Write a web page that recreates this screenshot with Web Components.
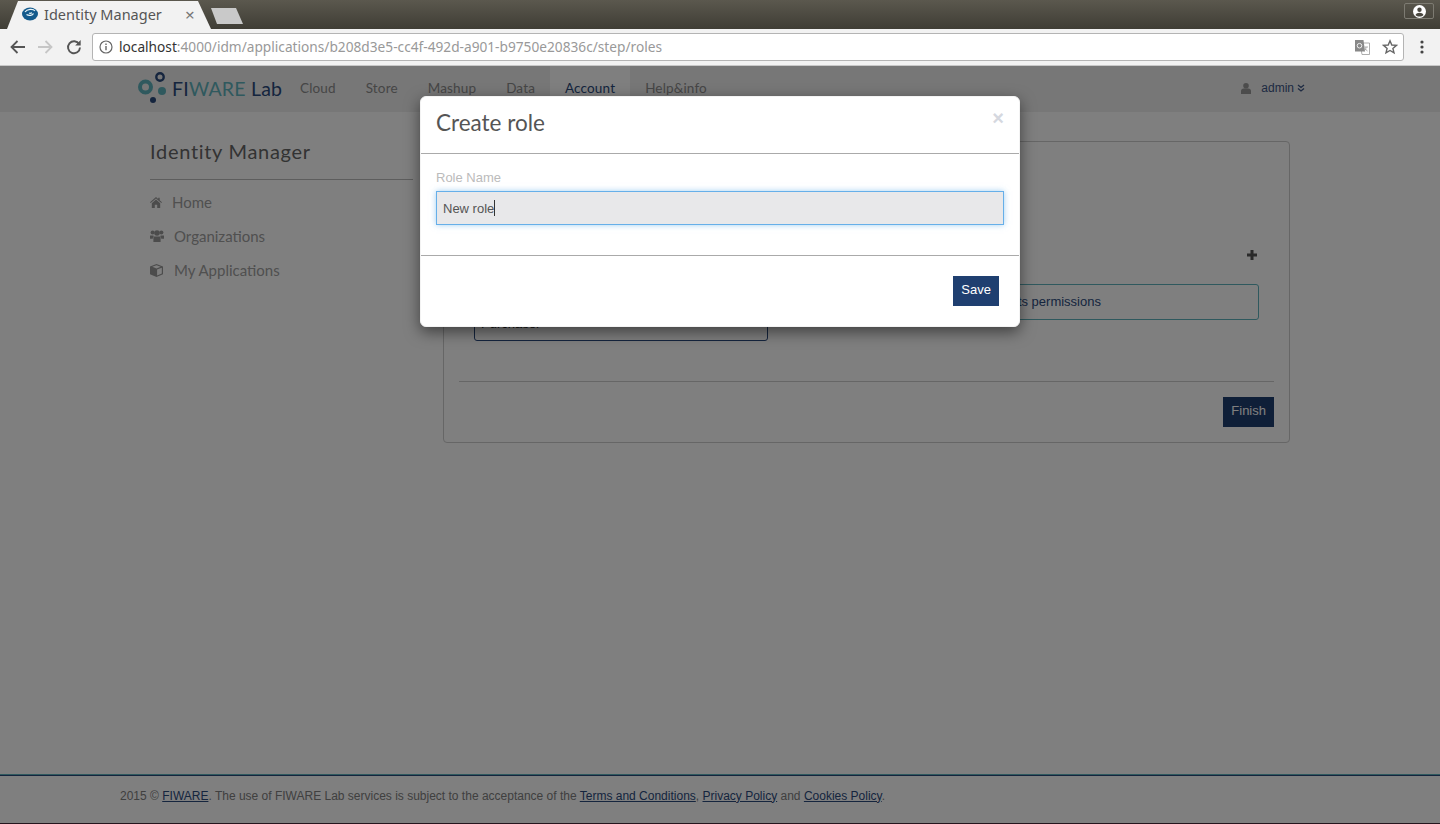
<!DOCTYPE html>
<html>
<head>
<meta charset="utf-8">
<title>Identity Manager</title>
<style>
html, body { margin: 0; padding: 0; height: 100%; }
body { display: flex; flex-direction: column; width: 1440px; height: 824px; overflow: hidden; background: #fff; font-family: "Liberation Sans", sans-serif; }
</style>
</head>
<body>
<browser-chrome></browser-chrome>
<app-page>
  <app-header slot="header">
    <nav-link>Cloud</nav-link>
    <nav-link>Store</nav-link>
    <nav-link>Mashup</nav-link>
    <nav-link>Data</nav-link>
    <nav-link active>Account</nav-link>
    <nav-link>Help&amp;info</nav-link>
  </app-header>
  <side-menu slot="side">
    <side-item gap="10">
      <svg slot="icon" width="12" height="11" viewBox="0 0 12 11"><path fill="currentColor" d="M6 0 8.2 1.9V.8h1.5v2.4L12 5.2l-.7.8L6 1.5.7 6 0 5.2zM1.8 6.2 6 2.6l4.2 3.6V11H7.2V7.8H4.8V11h-3z"/></svg>
      Home
    </side-item>
    <side-item gap="10">
      <svg slot="icon" width="14" height="12" viewBox="0 0 14 12"><g fill="currentColor"><circle cx="2.6" cy="2.6" r="2"/><circle cx="11.4" cy="2.6" r="2"/><circle cx="7" cy="3" r="2.8"/><path d="M0 5.6h2.9c.5 0 .9.2 1.2.5C3.200 6.800 2.800 7.700 2.800 8.800H0zM14 5.600h-2.900c-.5 0-.9.2-1.200.5.900.700 1.300 1.600 1.300 2.700H14zM4.700 6.400h4.600c.8 0 1.300.6 1.300 1.400V12H3.400V7.800c0-.8.500-1.400 1.300-1.400z"/></g></svg>
      Organizations
    </side-item>
    <side-item gap="11">
      <svg slot="icon" width="13" height="13" viewBox="0 0 13 13"><path fill="currentColor" d="M6.500 0 13 2.400v7.900L6.500 13 0 10.300V2.400zM6.500 1.300 2.300 2.800l4.200 1.600 4.200-1.600zM7.100 5.400v6l4.700-1.900V3.700z"/></svg>
      My Applications
    </side-item>
  </side-menu>
  <roles-card slot="content"></roles-card>
  <app-footer slot="footer"></app-footer>
  <role-modal slot="overlay"></role-modal>
</app-page>

<script>
class BrowserChrome extends HTMLElement {
  constructor() {
    super()
    this.attachShadow({mode: 'open'})
    this.shadowRoot.innerHTML = `
    <style>
    :host { display: block; height: 66px; flex: none; font-family: "Noto Sans", sans-serif; }
    .strip { height: 29px; display: flex; align-items: flex-end; justify-content: space-between; background: linear-gradient(#5b584e, #3f3d35); }
    .tabs { display: flex; align-items: flex-start; height: 28px; }
    .tab { margin-left: 7px; width: 204px; height: 28px; box-sizing: border-box; padding: 0 0 2px 15px; display: flex; align-items: center; background: #f2f2f2; clip-path: polygon(0 100%, 11px 0, 191px 0, 204px 100%); color: #555; font-size: 14.500px; }
    .tab svg { flex: none; margin-right: 6px; }
    .tab span { width: 141px; white-space: nowrap; }
    .tab b { font-weight: normal; color: #777; font-size: 17px; line-height: 1; }
    .newtab { margin-top: 7px; width: 32px; height: 16px; background: #c9c9c9; clip-path: polygon(0 0, 25px 0, 32px 100%, 6px 100%); }
    .profile { align-self: flex-start; margin: 3px 6px 0 0; width: 30px; height: 16px; box-sizing: border-box; border: 1px solid #7d7b72; border-radius: 2px; display: flex; align-items: center; justify-content: center; }
    .bar { height: 37px; box-sizing: border-box; display: flex; align-items: center; background: #f2f2f2; border-bottom: 1px solid #c8c8c8; padding-left: 10px; }
    .nav { display: flex; align-items: center; gap: 11px; width: 82px; flex: none; }
    .nav svg:last-child { margin-left: 2px; }
    .omni { width: 1312px; height: 28px; box-sizing: border-box; border: 1px solid #b4b4b4; border-radius: 3px; background: #fff; display: flex; align-items: center; padding-left: 6px; font-size: 13.700px; color: #999; }
    .url { margin-left: 6px; flex: 1; white-space: nowrap; padding-bottom: 2px; }
    .url em { font-style: normal; color: #333; }
    .omni .tr { margin-right: 12px; }
    .omni .st { margin-right: 5px; }
    .dots { margin-left: 16px; }
    </style>
    <div class="strip">
      <div class="tabs">
        <div class="tab">
          <svg width="16" height="16" viewBox="0 0 16 16"><ellipse cx="8" cy="8" rx="8" ry="6.500" fill="#135a8c"/><path d="M3 6c2-3 8-3.500 10-1M4.500 8.500c2.500 1.500 6 1 7-1M7 7c1 .5 2 .4 3-.2" fill="none" stroke="#e8f4f8" stroke-width="1.200"/></svg>
          <span>Identity Manager</span>
          <b>×</b>
        </div>
        <div class="newtab"></div>
      </div>
      <div class="profile">
        <svg width="13" height="13" viewBox="0 0 13 13"><circle cx="6.500" cy="6.500" r="6.500" fill="#fff"/><circle cx="6.500" cy="4.800" r="2.200" fill="#4a4840"/><path d="M2.500 10c.6-1.600 2.300-2.300 4-2.300s3.400.7 4 2.300c-1 1-2.400 1.600-4 1.600s-3-.6-4-1.600z" fill="#4a4840"/></svg>
      </div>
    </div>
    <div class="bar">
      <div class="nav">
        <svg width="16" height="14" viewBox="0 0 16 14"><path d="M15 7H2M7.500 1 1.500 7l6 6" fill="none" stroke="#555" stroke-width="1.800"/></svg>
        <svg width="16" height="14" viewBox="0 0 16 14"><path d="M1 7h13M8.500 1l6 6-6 6" fill="none" stroke="#c6c6c6" stroke-width="1.800"/></svg>
        <svg width="16" height="16" viewBox="0 0 16 16"><path d="M13.200 5.200A6 6 0 1 0 14 8.500" fill="none" stroke="#555" stroke-width="1.900"/><path d="M14.700 1v5.500H9.200z" fill="#555"/></svg>
      </div>
      <div class="omni">
        <svg width="14" height="14" viewBox="0 0 14 14"><circle cx="7" cy="7" r="6" fill="none" stroke="#666" stroke-width="1.200"/><path d="M6.300 6h1.400v4.300H6.300zM6.300 3.500h1.400v1.400H6.300z" fill="#666"/></svg>
        <div class="url"><em>localhost</em>:4000/idm/applications/b208d3e5-cc4f-492d-a901-b9750e20836c/step/roles</div>
        <svg class="tr" width="15" height="15" viewBox="0 0 15 15"><path d="M5 3h9.500v11.500H7z" fill="#fff" stroke="#999" stroke-width=".8"/><path d="M0 0h8.500l1.500 11.500H0z" fill="#888"/><circle cx="4.500" cy="5.700" r="2.300" fill="none" stroke="#eee" stroke-width="1"/><path d="M9.500 7h3.500M11 7c0 2-1 3.500-2 4M10 8.500c.7 1.200 1.500 2 2.500 2.500" fill="none" stroke="#999" stroke-width=".8"/></svg>
        <svg class="st" width="16" height="16" viewBox="0 0 16 16"><path d="M8 1.800 9.800 6l4.600.4-3.500 3 1.100 4.500L8 11.500l-4 2.400 1.100-4.500-3.500-3L6.200 6z" fill="none" stroke="#666" stroke-width="1.400"/></svg>
      </div>
      <svg class="dots" width="4" height="14" viewBox="0 0 4 14"><g fill="#444"><circle cx="2" cy="2" r="1.600"/><circle cx="2" cy="7" r="1.600"/><circle cx="2" cy="12" r="1.600"/></g></svg>
    </div>`
  }
}
customElements.define('browser-chrome', BrowserChrome)

class AppPage extends HTMLElement {
  constructor() {
    super()
    this.attachShadow({mode: 'open'})
    this.shadowRoot.innerHTML = `
    <style>
    :host { display: flex; flex-direction: column; flex: 1; min-height: 0; position: relative; background: #fff; }
    main { flex: 1; display: grid; grid-template-columns: 263px 847px; column-gap: 30px; align-items: start; padding: 29px 0 0 150px; }
    </style>
    <slot name="header"></slot>
    <main><slot name="side"></slot><slot name="content"></slot></main>
    <slot name="footer"></slot>
    <slot name="overlay"></slot>`
  }
}
customElements.define('app-page', AppPage)

class AppHeader extends HTMLElement {
  constructor() {
    super()
    this.attachShadow({mode: 'open'})
    this.shadowRoot.innerHTML = `
    <style>
    :host { display: flex; height: 46px; flex: none; background: #eee; padding: 0 135px 0 138px; align-items: stretch; }
    .logo { display: flex; align-items: center; width: 147px; flex: none; }
    .logo svg { flex: none; }
    .brand { margin-left: 4px; font: 19.500px/1 Lato, sans-serif; letter-spacing: .2px; color: #2b4a7d; white-space: nowrap; }
    .brand i { font-style: normal; color: #5fb3bd; }
    .links { display: flex; }
    .user { margin-left: auto; padding-bottom: 2px; display: flex; align-items: center; font-size: 12px; color: #3c5585; }
    .user svg:first-child { margin-right: 10px; color: #999; }
    .user svg:last-child { margin-left: 3px; }
    </style>
    <div class="logo">
      <svg width="30" height="34" viewBox="0 0 30 34"><circle cx="7.500" cy="15" r="5.500" fill="none" stroke="#5fb3bd" stroke-width="4"/><circle cx="22" cy="5" r="3.700" fill="none" stroke="#2b4a7d" stroke-width="2.400"/><circle cx="24" cy="19" r="4" fill="#5fb3bd"/><circle cx="15" cy="28" r="3" fill="#2b4a7d"/></svg>
      <div class="brand">FI<i>WARE</i> Lab</div>
    </div>
    <div class="links"><slot></slot></div>
    <div class="user">
      <svg width="10" height="11" viewBox="0 0 10 11"><circle cx="5" cy="2.800" r="2.800" fill="currentColor"/><path d="M0 11V8c0-1.500 1.200-2.500 2.500-2.500h5C8.800 5.500 10 6.500 10 8v3z" fill="currentColor"/></svg>
      admin
      <svg width="8" height="8" viewBox="0 0 8 8"><path d="M1 1l3 2.500L7 1M1 4.500 4 7l3-2.500" fill="none" stroke="currentColor" stroke-width="1.300"/></svg>
    </div>`
  }
}
customElements.define('app-header', AppHeader)

class NavLink extends HTMLElement {
  constructor() {
    super()
    this.attachShadow({mode: 'open'})
    this.shadowRoot.innerHTML = `
    <style>
    :host { display: flex; align-items: center; padding: 0 15px 2px; font: 13.500px Lato, sans-serif; letter-spacing: .15px; color: #8c8c8c; white-space: nowrap; }
    :host([active]) { background: #fff; color: #2b4a7d; }
    </style>
    <slot></slot>`
  }
}
customElements.define('nav-link', NavLink)

class SideMenu extends HTMLElement {
  constructor() {
    super()
    this.attachShadow({mode: 'open'})
    this.shadowRoot.innerHTML = `
    <style>
    :host { display: block; }
    h2 { margin: 0 0 5px; height: 39px; box-sizing: border-box; border-bottom: 1px solid #bbb; font: 400 20px/20px Lato, sans-serif; letter-spacing: .7px; color: #666; }
    </style>
    <h2>Identity Manager</h2>
    <slot></slot>`
  }
}
customElements.define('side-menu', SideMenu)

class SideItem extends HTMLElement {
  constructor() {
    super()
    this.attachShadow({mode: 'open'})
    this.shadowRoot.innerHTML = `
    <style>
    :host { display: flex; align-items: center; height: 34px; font: 15px Lato, sans-serif; color: #a0a0a0; }
    .icon { display: flex; color: #999; }
    </style>
    <span class="icon"><slot name="icon"></slot></span>
    <span class="label"><slot></slot></span>`
  }
  connectedCallback() {
    this.shadowRoot.querySelector('.icon').style.marginRight = this.getAttribute('gap') + 'px'
  }
}
customElements.define('side-item', SideItem)

class RolesCard extends HTMLElement {
  constructor() {
    super()
    this.attachShadow({mode: 'open'})
    this.shadowRoot.innerHTML = `
    <style>
    :host { display: block; box-sizing: border-box; height: 302px; border: 1px solid #ccc; border-radius: 4px; padding: 101px 15px 15px; font: 13px "Liberation Sans", sans-serif; }
    .add { height: 24px; padding-right: 16px; display: flex; justify-content: flex-end; align-items: center; }
    .lists { margin-top: 17px; display: grid; grid-template-columns: 294px 476px; column-gap: 15px; padding-left: 15px; align-items: start; }
    .list { height: 57px; box-sizing: border-box; border: 1px solid #2b4a7d; border-radius: 3px; display: flex; align-items: flex-end; padding: 0 0 9px 6px; color: #222; }
    .hint { height: 36px; box-sizing: border-box; border: 1px solid #5fb3bd; border-radius: 3px; display: flex; align-items: center; padding: 0 0 2px 231px; color: #2b4a7d; }
    hr { border: 0; border-top: 1px solid #ccc; margin: 40px 0 15px; }
    .foot { display: flex; justify-content: flex-end; }
    .finish { height: 30px; box-sizing: border-box; padding: 0 8px 4px; display: flex; align-items: center; background: #1f3f70; color: #fff; }
    </style>
    <div class="add"><svg width="12" height="12" viewBox="0 0 12 12"><path d="M4.500 1h3v3.500H11v3H7.500V11h-3V7.500H1v-3h3.500z" fill="#555"/></svg></div>
    <div class="lists">
      <div class="list">Purchaser</div>
      <div class="hint">its permissions</div>
    </div>
    <hr>
    <div class="foot"><div class="finish">Finish</div></div>`
  }
}
customElements.define('roles-card', RolesCard)

class AppFooter extends HTMLElement {
  constructor() {
    super()
    this.attachShadow({mode: 'open'})
    this.shadowRoot.innerHTML = `
    <style>
    :host { display: flex; flex: none; height: 50px; box-sizing: border-box; align-items: center; padding: 0 0 8px 120px; border-top: 1px solid #5fb3bd; box-shadow: inset 0 1px 0 #2b4a7d, inset 0 -1px 0 #4a2a3a; font: 12px "Liberation Sans", sans-serif; color: #808080; white-space: pre; }
    a { color: #2b4a7d; text-decoration: underline; }
    </style>
    <div>2015 © <a>FIWARE</a>. The use of FIWARE Lab services is subject to the acceptance of the <a>Terms and Conditions</a>, <a>Privacy Policy</a> and <a>Cookies Policy</a>.</div>`
  }
}
customElements.define('app-footer', AppFooter)

class RoleModal extends HTMLElement {
  constructor() {
    super()
    this.attachShadow({mode: 'open'})
    this.shadowRoot.innerHTML = `
    <style>
    :host { display: block; position: absolute; inset: 0; background: rgba(0,0,0,.5); padding-top: 30px; font: 13px "Liberation Sans", sans-serif; }
    .dialog { width: 600px; box-sizing: border-box; height: 231px; margin: 0 auto; background: #fff; border-radius: 6px; box-shadow: 0 5px 15px rgba(0,0,0,.5); border: 1px solid #f3f3f3; display: flex; flex-direction: column; }
    header { height: 57px; flex: none; box-sizing: border-box; border-bottom: 1px solid #aaa; padding: 0 15px; display: flex; justify-content: space-between; color: #555; }
    h3 { margin: 0; font: 400 22.500px/52px Lato, sans-serif; }
    .close { margin: 11px 0 0; font: bold 20px/20px "Liberation Sans", sans-serif; color: #d5d8df; }
    .body { height: 102px; flex: none; box-sizing: border-box; border-bottom: 1px solid #aaa; padding: 16px 15px 0; }
    label { display: block; color: #bbb; height: 21px; }
    .input { height: 34px; box-sizing: border-box; border: 1px solid #66afe9; background: #e8e8ea; box-shadow: 0 0 6px rgba(102,175,233,.6); padding: 0 6px; display: flex; align-items: center; color: #555; }
    .input i { width: 1px; height: 16px; background: #333; }
    .foot { flex: 1; display: flex; justify-content: flex-end; align-items: flex-start; padding: 20px 20px 0 0; }
    button { height: 30px; border: 0; padding: 0 8px 4px; background: #1f3f70; color: #fff; font: inherit; }
    </style>
    <div class="dialog">
      <header><h3>Create role</h3><span class="close">×</span></header>
      <div class="body">
        <label>Role Name</label>
        <div class="input">New role<i></i></div>
      </div>
      <div class="foot"><button>Save</button></div>
    </div>`
  }
}
customElements.define('role-modal', RoleModal)
</script>
</body>
</html>
